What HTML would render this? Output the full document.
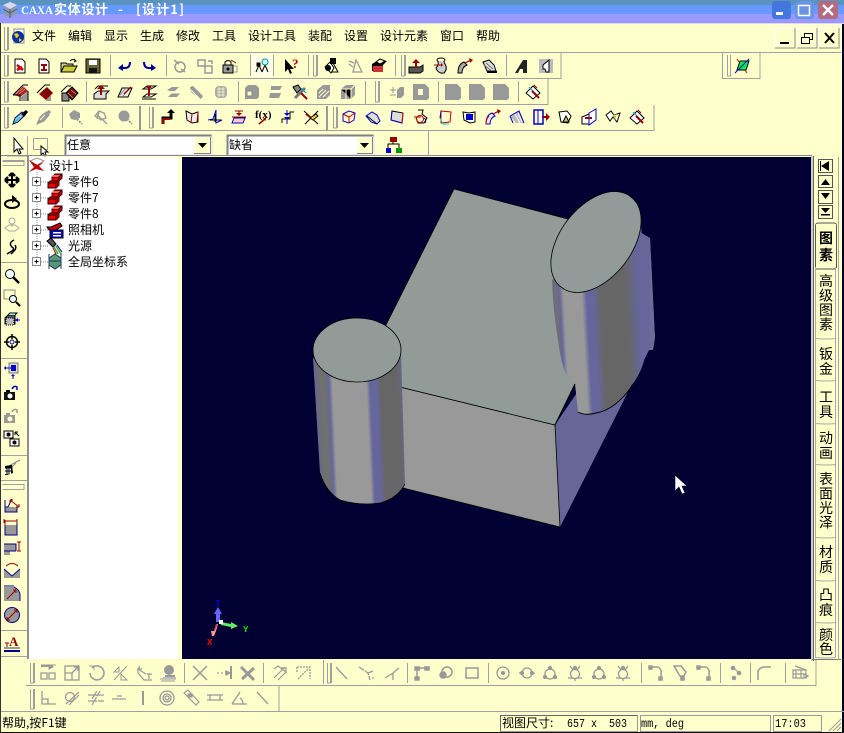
<!DOCTYPE html>
<html><head><meta charset="utf-8"><style>
html,body{margin:0;padding:0;background:#ffc}
svg{display:block;position:absolute;left:0;top:0}
text{font-family:"WenQuanYi Zen Hei","Noto Sans CJK SC",sans-serif;font-size:12px;fill:#000}
.m{font-family:"Liberation Mono","WenQuanYi Zen Hei",monospace}
.g{fill:none;stroke:#a0a0a0}
</style></head><body>
<svg width="844" height="733" viewBox="0 0 844 733" xmlns="http://www.w3.org/2000/svg">
<defs>
<pattern id="dt" width="2" height="2" patternUnits="userSpaceOnUse"><rect width="2" height="2" fill="#939a98"/><rect width="1" height="1" fill="#8a9f9a"/></pattern>
<linearGradient id="cl" gradientUnits="userSpaceOnUse" x1="315" y1="420" x2="406" y2="416">
<stop offset="0" stop-color="#66669c"/><stop offset=".04" stop-color="#6a6a80"/><stop offset=".08" stop-color="#707070"/><stop offset=".13" stop-color="#707070"/><stop offset=".17" stop-color="#66669c"/><stop offset=".21" stop-color="#999"/><stop offset=".58" stop-color="#999"/><stop offset=".62" stop-color="#66669c"/><stop offset=".69" stop-color="#66669c"/><stop offset=".74" stop-color="#666"/><stop offset=".92" stop-color="#666"/><stop offset="1" stop-color="#66669c"/>
</linearGradient>
<linearGradient id="cr" gradientUnits="userSpaceOnUse" x1="553" y1="331" x2="648" y2="326">
<stop offset="0" stop-color="#66669c"/><stop offset=".05" stop-color="#707070"/><stop offset=".09" stop-color="#66669c"/><stop offset=".13" stop-color="#999"/><stop offset=".32" stop-color="#999"/><stop offset=".37" stop-color="#66669c"/><stop offset=".44" stop-color="#66669c"/><stop offset=".52" stop-color="#666"/><stop offset=".78" stop-color="#666"/><stop offset=".92" stop-color="#66669c"/><stop offset="1" stop-color="#66669c"/>
</linearGradient>
<g id="docr"><path d="M3 1h7l3 3v11H3z" fill="#fff" stroke="#000"/><path d="M5 7l6 5M5 12l5-3" stroke="#c00" stroke-width="2.500" fill="none"/></g>
<g id="docb"><path d="M3 1h7l3 3v11H3z" fill="#fff" stroke="#000"/><path d="M5 6h6v2H9v3h2v2H5v-2h2V8H5z" fill="#900"/></g>
<g id="open"><path d="M0 14V5h5l1 1h6v8z" fill="#cc9" stroke="#000"/><path d="M0 14l3-6h13l-3 6z" fill="#cc3" stroke="#000"/><path d="M9 3q3-3 6 0M13 1l2 2-2 1" stroke="#000" fill="none"/></g>
<g id="save"><rect x="1" y="1" width="14" height="14" fill="#663" stroke="#000"/><rect x="4" y="2" width="8" height="5" fill="#fff"/><rect x="4" y="10" width="8" height="5" fill="#111"/></g>
<g id="undo"><path d="M13 12q0-6-5-6H3" fill="none" stroke="#0000a0" stroke-width="2" transform="matrix(1 0 0 -1 0 16)"/><path d="M1 10l5-4v7z" fill="#0000a0"/></g>
<g id="redo"><path d="M3 12q0-6 5-6h4" fill="none" stroke="#0000a0" stroke-width="2" transform="matrix(1 0 0 -1 0 16)"/><path d="M15 10l-5-4v7z" fill="#0000a0"/></g>
<g id="g1" fill="none" stroke="#999" stroke-width="1.500"><circle cx="8" cy="9" r="5"/><path d="M2 2l5 4M13 14l-4-3"/></g>
<g id="g2" fill="none" stroke="#999" stroke-width="1.500"><path d="M1 2h7v6H1zM8 8h7v7H8z"/><path d="M11 3h4v3"/></g>
<g id="lock"><rect x="2" y="7" width="10" height="8" fill="#999" stroke="#000"/><path d="M4 7V4q3-3 6 0v3" fill="none" stroke="#000"/><circle cx="7" cy="11" r="1.500" fill="#000"/><path d="M10 2l5 3" stroke="#900"/><path d="M13 8h3v6h-3" fill="none" stroke="#999"/></g>
<g id="tree" stroke="#000" fill="none"><path d="M5 7L2 14M5 7l3 7M11 7L8 14M11 7l3 7"/><circle cx="11" cy="4" r="3" stroke="#099" fill="#cff"/><rect x="3" y="5" width="3" height="3" fill="#000"/></g>
<g id="help"><path d="M1 1v13l3-3 2 5 2-1-2-4h4z" fill="#000"/><text x="8" y="10" style="font:bold 13px 'Liberation Serif';fill:#a00">?</text></g>
<g id="cog" fill="#000"><path d="M2 9l5-5 4 6-3 5z" fill="#fff" stroke="#000"/><rect x="7" y="0" width="6" height="6" fill="#000"/><circle cx="5" cy="10" r="3"/><path d="M10 5l5 9H9" fill="none" stroke="#000"/></g>
<g id="gtri" fill="none" stroke="#999" stroke-width="1.300"><path d="M2 3l5 2M2 6l4 3M9 2l6 12H6z"/></g>
<g id="rbox"><path d="M1 6l5-3h10l-4 4v6H1z" fill="#000"/><rect x="2" y="8" width="10" height="6" fill="#c33"/><path d="M5 4l4-3 5 2-5 3z" fill="#ffc" stroke="#000"/></g>
<g id="up"><path d="M1 9h11l3-2v6l-3 2H1z" fill="#555" stroke="#000"/><path d="M8 1l4 4H9v5H7V5H4z" fill="#900"/></g>
<g id="pot"><ellipse cx="8" cy="2" rx="4" ry="2" fill="#ffc" stroke="#000"/><path d="M5 3q1 4-2 7 2 6 8 5 4-4 1-9-1-1-1-3" fill="#ccc" stroke="#000"/><path d="M1 7h7" stroke="#900"/><path d="M8 5l2 2-2 2z" fill="#900"/></g>
<g id="arc"><path d="M1 15q0-9 6-11l3 3q-5 2-5 8z" fill="#aaa" stroke="#000"/><path d="M8 5l6-3" stroke="#900"/><path d="M12 0l4 2-3 3z" fill="#900"/></g>
<g id="slab"><path d="M2 4l6-2 5 5 2 6H6z" fill="#ddd" stroke="#000"/><path d="M3 7l9 7M5 5l7 6" stroke="#777"/><path d="M6 14h10" stroke="#000" stroke-width="2"/></g>
<g id="bigA"><path d="M1 15L9 2h4v13H9v-4H6l-2 4z" fill="#222"/></g>
<g id="hatch"><rect x="1" y="1" width="14" height="14" fill="#bbb"/><path d="M5 7l6-5v12H8l-1-3H5z" fill="#fff" stroke="#000"/></g>
<g id="greenp"><path d="M3 12l3-9h9l-3 9z" fill="#0e5" stroke="#000"/><path d="M1 15L15 1" stroke="#00c"/><path d="M3 1l2 3M11 12l2 3" stroke="#c00"/></g>
<g id="wedge1"><path d="M1 11L10 2l5 5-8 6z" fill="#a22"/><path d="M3 10l8-7M5 11l7-6" stroke="#ffc" stroke-width=".5"/><path d="M8 13l7-6v10H8z" fill="#999"/><path d="M0 11L10 1h5M0 11h7v6M15 7v10" fill="none" stroke="#000"/></g>
<g id="wedge2"><path d="M2 10l8-7 6 6-7 7z" fill="#900"/><path d="M4 10l6-5M7 12l6-5M6 6l7 7M9 4l6 6" stroke="#400" stroke-width=".7"/><path d="M0 9L8 1h5" fill="none" stroke="#000"/><path d="M9 16l5-5v6H9z" fill="#999"/></g>
<g id="wedge3"><rect x="1" y="9" width="7" height="8" fill="#888" stroke="#000"/><path d="M5 9l6-6 6 6-6 7z" fill="#711" stroke="#000"/><path d="M0 8l6-6h4" fill="none" stroke="#000"/><path d="M7 9l5 5M10 6l5 4" stroke="#ffc" stroke-width=".5"/></g>
<g id="ext1"><path d="M1 10l4-3h11l-3 3v5H1z" fill="#ddd" stroke="#000"/><path d="M2 5l3-3h10" fill="none" stroke="#000"/><path d="M8 1l4 4H9v6H7V5H4z" fill="#900"/></g>
<g id="ext2"><path d="M1 13l4-9h10l-4 9z" fill="#eee" stroke="#000"/><path d="M3 11l5-6M6 12l5-6" stroke="#888"/><path d="M7 10l7-7" stroke="#900" stroke-width="1.500"/></g>
<g id="ext3"><path d="M2 5l4-3h9l-5 3zM2 13l4-3h9l-5 3z" fill="#fff" stroke="#000"/><path d="M8 1l3 3H9v8H7V4H5z" fill="#900"/><path d="M1 15h14" stroke="#000"/></g>
<g id="gsw" fill="#999"><path d="M2 6l5-3h7l-4 4H5zM3 13l4-4h8l-3 4z"/><path d="M2 9h12" stroke="#ffc"/></g>
<g id="gsw2" fill="#999"><path d="M1 3l3-1 10 10-2 3L6 11 2 8z"/><path d="M2 6l8 8M6 3l8 8" stroke="#ffc"/></g>
<g id="gcy"><rect x="2" y="2" width="12" height="12" rx="4" fill="#aaa"/><path d="M4 5h8M4 8h8M4 11h8M6 3v10M10 3v10" stroke="#ffc" stroke-width=".7"/></g>
<g id="gb1"><path d="M1 4l3-3h8l3 3v9l-2 2H1z" fill="#999"/><rect x="3" y="7" width="5" height="5" fill="#ffc" stroke="#888"/></g>
<g id="gb2"><path d="M3 2h11l-2 4H3zM2 9h11l-2 5H1z" fill="#999"/></g>
<g id="tool"><path d="M1 3l5-2 3 4-4 4z" fill="#888" stroke="#000"/><path d="M3 14L13 4" stroke="#777" stroke-width="3"/><path d="M9 9l6 6" stroke="#900" stroke-width="2"/><path d="M9 4l5 5" stroke="#09c"/></g>
<g id="gb3"><path d="M1 6l6-5h7v10l-4 4H1z" fill="#999"/><path d="M3 13l7-7M3 9l4-4M7 13l6-6" stroke="#ffc"/></g>
<g id="gb4"><path d="M1 5l5-4h9v10l-4 4H1z" fill="#999"/><path d="M1 5h10v10M11 5l4-4M6 5v10" stroke="#ffc"/></g>
<g id="gpm"><path d="M1 6h6M4 3v6M1 11h6" stroke="#999"/><path d="M9 5l3-3h4v8l-3 3H9z" fill="#999" transform="translate(-1 1)"/></g>
<g id="gpb"><path d="M0 0h12l4 4v10l-2 2H0z" fill="#999"/><rect x="5" y="5" width="5" height="6" fill="#ffc"/></g>
<g id="gpf"><path d="M0 0h12l4 4v10l-2 2H0z" fill="#999"/></g>
<g id="toolb"><path d="M1 9l7-7 7 7-7 6z" fill="#fff" stroke="#000"/><path d="M4 3l7 7" stroke="#09c"/><path d="M7 7l7 7" stroke="#900" stroke-width="2"/><path d="M9 1l3 3" stroke="#900"/></g>
<g id="drop"><path d="M1 15l2-6 7-6 3 3-7 7z" fill="#9ce" stroke="#004"/><path d="M9 5l5-4 2 2-4 5z" fill="#000"/><path d="M2 14l6-6" stroke="#0cc"/></g>
<g id="dropg"><path d="M1 15l3-7 6-5 3 3-5 6z" fill="#999" stroke="#999"/><path d="M9 4l4-3 2 2-3 4z" fill="#999"/><path d="M4 11l5-5" stroke="#ffc"/></g>
<g id="gm1"><path d="M1 5l5-4 6 3 0 5-5 2-4-1z" fill="#999"/><path d="M9 10l5 5" stroke="#999" stroke-width="2" stroke-dasharray="2 1"/></g>
<g id="gm2" fill="none" stroke="#999" stroke-width="1.300"><path d="M2 7l4-5 5 2 2 5-5 2z"/><path d="M3 5l7 6M6 3l-2 7"/><path d="M10 11l4 4"/></g>
<g id="gm3"><circle cx="7" cy="7" r="5.500" fill="#999"/><path d="M10 10l5 5" stroke="#999" stroke-width="2" stroke-dasharray="2 1"/></g>
<g id="path"><path d="M3 15V9h8V3" fill="none" stroke="#000" stroke-width="3"/><path d="M3 15V10h7" fill="none" stroke="#900" stroke-width="2"/><path d="M11 0l4 4H7z" fill="#000"/></g>
<g id="rlf"><path d="M2 2l6 3 6-2v10l-6 1-5-3z" fill="#eee" stroke="#000"/><path d="M8 5l-1 9" stroke="#900"/><path d="M14 3l-1 10" stroke="#c00"/></g>
<g id="pl"><path d="M1 11l5-1 3-9v13l6-3H9" fill="none" stroke="#00c"/><path d="M8 5v8M3 11h11" stroke="#000"/></g>
<g id="pl2"><path d="M4 2h8M8 2v4" stroke="#900"/><path d="M5 4l3 3 3-3z" fill="#900"/><path d="M3 9h11l-2 5H1z" fill="#fcc" stroke="#00c"/><path d="M1 8h14" stroke="#900"/></g>
<g id="fx"><text x="0" y="9" style="font:bold 11px 'Liberation Serif'">f(x)</text><path d="M4 15l6-5" stroke="#900" stroke-width="1.500"/><path d="M8 9l3 0 0 3z" fill="#900"/></g>
<g id="cnt"><path d="M2 14v-4h8V3h4" fill="none" stroke="#000"/><path d="M7 1v5M7 10v5" stroke="#00c"/><path d="M4 7h6L7 10zM7 6L4 3h6z" fill="#00c" transform="translate(0 1)"/></g>
<g id="cross"><path d="M1 2l14 13M2 15L15 2" stroke="#000"/><path d="M7 9l6-4 2 2-5 4z" fill="#fc3" stroke="#000"/><path d="M3 5l4 3" stroke="#900" stroke-width="2"/></g>
<g id="bl1" fill="none"><path d="M2 5l6-3 6 2-1 7-5 3-6-2z" stroke="#00c"/><path d="M2 5l6 3 6-4M8 8v6" stroke="#c00"/></g>
<g id="bl2" fill="none"><path d="M1 7l6-4 5 3 3 6-3 3-6-2z" fill="#ddd" stroke="#00c"/><path d="M2 7l10 8" stroke="#000"/></g>
<g id="bl3"><path d="M3 2l11 2-1 10-11-3z" fill="#ddd" stroke="#000"/><path d="M3 2l-1 9" stroke="#00c"/><path d="M14 4l-1 10" stroke="#c00"/><path d="M2 11l11 3" stroke="#00c"/></g>
<g id="bl4" fill="none"><path d="M5 1h5l-1 4 5 4-3 5H5L3 9" stroke="#000"/><circle cx="7" cy="10" r="3.500" stroke="#c00"/><path d="M1 8h7" stroke="#900"/><path d="M11 9q3 2 1 5" stroke="#00c"/></g>
<g id="bl5" fill="none"><path d="M4 2l10 1-1 10-9 1z" stroke="#c00"/><path d="M3 9l3 6h6" stroke="#0cc"/><path d="M4 2L3 9" stroke="#00c"/></g>
<g id="bl6"><path d="M2 3l6 1 6-1 0 10-5 1-6-3z" fill="#fff" stroke="#000"/><rect x="5" y="5" width="7" height="6" fill="#00c"/></g>
<g id="bl7" fill="none"><path d="M1 15q0-9 6-11l3 3q-5 2-5 8z" fill="#eee" stroke="#00c"/><path d="M1 15q0-5 3-8" stroke="#c00"/><path d="M8 5l6-3" stroke="#900"/><path d="M12 0l4 2-3 3z" fill="#900"/></g>
<g id="bl8"><path d="M1 7l9-5 5 12H7z" fill="#bbb" stroke="none"/><path d="M1 7l9-5 5 12M1 7l3 7" fill="none" stroke="#00c"/><path d="M6 5l5 9M9 4l4 9" stroke="#fff"/></g>
<g id="bl9"><rect x="1" y="1" width="9" height="14" fill="#fff" stroke="#00c" stroke-width="1.500"/><path d="M5 1v14" stroke="#00c"/><path d="M9 7h5v2H9z" fill="#900"/><path d="M13 4l4 4-4 4z" fill="#900"/></g>
<g id="bl10"><path d="M2 3l8-1 4 5-3 7-7-1z" fill="#fff" stroke="#000"/><path d="M6 13l3-6 3 6z" fill="#cc6" stroke="#000"/></g>
<g id="bl11"><path d="M1 8l7-3v10L1 15z" fill="#fff" stroke="#000"/><path d="M8 4l7-4v11l-7 5z" fill="#fff" stroke="#00c"/><path d="M4 9h7" stroke="#900" stroke-width="2"/></g>
<g id="bl12"><path d="M1 6l5-4 3 4 6-2-3 9-4-5-3 4z" fill="#fff" stroke="#000"/><path d="M8 6l4-1-2 6z" fill="#cc3"/></g>
<g id="ml" stroke="#000" stroke-width="2" fill="none"><path d="M1 8h14M8 1v14"/><path d="M1 8l3-3M1 8l3 3M15 8l-3-3M15 8l-3 3M8 1L5 4M8 1l3 3M8 15l-3-3M8 15l3-3" stroke-width="2.500"/></g>
<g id="rot"><ellipse cx="8" cy="10" rx="7" ry="4" fill="none" stroke="#000" stroke-width="2"/><path d="M8 1l5 4-5 4z" fill="#000"/></g>
<g id="pers" fill="none" stroke="#aaa"><circle cx="8" cy="4" r="3"/><path d="M8 7v3M1 11l4-3h6l4 3-4 3H5z"/></g>
<g id="walk" fill="none" stroke="#000" stroke-width="1.500"><path d="M10 1Q4 4 8 8q3 2 0 4l-5 3"/><path d="M11 6q2 3-1 6l-3 3"/></g>
<g id="zm"><circle cx="6" cy="6" r="4.500" fill="#ecffff" stroke="#000"/><path d="M9 9l6 6" stroke="#000" stroke-width="2.500"/></g>
<g id="zw"><rect x="0" y="0" width="11" height="9" fill="none" stroke="#888"/><circle cx="9" cy="9" r="3.500" fill="#ecffff" stroke="#000"/><path d="M12 12l4 4" stroke="#000" stroke-width="2"/></g>
<g id="fit"><path d="M1 6l3-3h7v9H1z" fill="#555" stroke="#000"/><path d="M2 6h8v7H2z" fill="#bbb" stroke="#000" stroke-dasharray="1 1"/><path d="M4 3l2-2h7l-2 2" fill="#9ff" stroke="#000"/><path d="M11 8h5" stroke="#00c"/><path d="M11 8l3-2v4z" fill="#00c"/></g>
<g id="tgt"><circle cx="8" cy="8" r="5.500" fill="none" stroke="#000" stroke-width="1.500"/><path d="M8 0v5M8 11v5M0 8h5M11 8h5" stroke="#000" stroke-width="1.500"/><circle cx="8" cy="8" r="2" fill="none" stroke="#00c"/></g>
<g id="vw"><rect x="5" y="0" width="9" height="10" fill="#ddd" stroke="#777"/><rect x="7" y="2" width="5" height="6" fill="#00c"/><path d="M7 5H0M9 11v5" stroke="#00c"/><path d="M2 3v4l-2-2zM7 12h4l-2 2z" fill="#00c"/></g>
<g id="cam"><rect x="0" y="7" width="11" height="8" fill="#111"/><circle cx="6" cy="11" r="2.500" fill="#fff"/><path d="M2 6h4" stroke="#000" stroke-width="2"/><path d="M8 4q2-4 5-2l0 3" fill="none" stroke="#00c" stroke-width="1.500"/></g>
<g id="camg"><rect x="0" y="7" width="11" height="8" fill="#999"/><circle cx="6" cy="11" r="2.500" fill="#ffc"/><path d="M2 6h4" stroke="#999" stroke-width="2"/><path d="M8 4q2-4 5-2l0 3" fill="none" stroke="#999" stroke-width="1.500"/></g>
<g id="cam2"><rect x="0" y="1" width="9" height="7" fill="#fff" stroke="#000"/><circle cx="4.500" cy="4.500" r="2" fill="#000"/><rect x="6" y="9" width="9" height="7" fill="#fff" stroke="#000"/><circle cx="10.500" cy="12.500" r="2" fill="#000"/><path d="M11 2l4 4M11 2h3M11 2v3" stroke="#000"/></g>
<g id="dir"><path d="M3 7L16 0" stroke="#888"/><path d="M6 9l6-6" stroke="#888"/><path d="M1 6l7-1 1 8-6 2H1z" fill="#000"/><rect x="1" y="8" width="6" height="6" fill="#fff"/><path d="M1 8h6M1 11h6M3 8v6M5 8v6" stroke="#000"/></g>
<g id="d1"><rect x="1" y="10" width="12" height="5" fill="#999"/><path d="M1 3v12h12V10" fill="none" stroke="#008"/><path d="M1 10h3L8 2" fill="none" stroke="#008"/><path d="M6 3l9 7M6 3h3M6 3v3M15 10h-3M15 10V7" stroke="#900" fill="none"/></g>
<g id="d2"><rect x="1" y="6" width="12" height="10" fill="#999"/><path d="M1 6v10h12V1" fill="none" stroke="#008"/><path d="M0 2h13M0 0v4M13 0v4" fill="none" stroke="#900"/><path d="M1 1v6" stroke="#900"/></g>
<g id="d3"><path d="M0 3h12v7H6v4H0z" fill="#999"/><path d="M0 3h12v7" fill="none" stroke="#008"/><path d="M0 10h12" stroke="#008"/><path d="M15 1v9M13 1h4M13 10h4" stroke="#900"/></g>
<g id="d4"><path d="M0 6l8 7 8-7v9H0z" fill="#999"/><path d="M0 6l8 7 8-7" fill="none" stroke="#008"/><path d="M2 3q6-5 12 0M2 3l3-2M14 3l-3-2" fill="none" stroke="#900"/></g>
<g id="d5"><path d="M0 1h10q6 3 6 8v6H0z" fill="#999"/><path d="M10 1q6 3 6 8v6" fill="none" stroke="#008"/><path d="M0 0h10" stroke="#008"/><path d="M3 13L12 4" stroke="#900"/><path d="M12 4v3M12 4h-3" stroke="#900"/></g>
<g id="d6"><circle cx="8" cy="8" r="7.500" fill="#999" stroke="#008"/><path d="M3 13L13 3M3 13h3M3 13v-3M13 3h-3M13 3v3" stroke="#900" fill="none"/></g>
<g id="d7"><path d="M0 15h16" stroke="#008" stroke-width="2"/><path d="M0 11h16v2H0z" fill="#999"/><path d="M1 7h4M3 7v4" stroke="#900"/><text x="5" y="10" style="font:bold 13px 'Liberation Serif';fill:#900">A</text></g>
<g id="b1"><path d="M1 0h15M9 0l4 2-4 2z" stroke="#999" fill="#999"/><path d="M1 8h6v6H1zM9 8h6v6H9z" fill="none" stroke="#999" stroke-width="1.300"/><path d="M1 0h12v2H1z" fill="#999"/></g>
<g id="b2" fill="none" stroke="#999" stroke-width="1.300"><rect x="1" y="1" width="14" height="14"/><path d="M1 8h7v7M8 8l6-6M10 2h4v4"/></g>
<g id="b3" fill="none" stroke="#999" stroke-width="1.500"><path d="M4 3A7 7 0 1 1 2 8"/><path d="M1 1h5v4" stroke-width="1"/></g>
<g id="b4" fill="none" stroke="#999" stroke-width="1"><path d="M2 15L15 1M2 7h5V2zM9 15V9l6 6z"/></g>
<g id="b5" fill="none" stroke="#999" stroke-width="1.200"><path d="M2 4l8 5M2 4v4l6 7h8M4 1l-2 3 4 0M11 9h5M13 9v5"/></g>
<g id="b6"><ellipse cx="9" cy="5" rx="5" ry="5" fill="#999"/><rect x="5" y="10" width="10" height="2" fill="#999"/><path d="M0 14h16M1 16h14" stroke="#999"/><rect x="3" y="12" width="13" height="2" fill="#bbb"/></g>
<g id="b7" fill="none" stroke="#999" stroke-width="1.500"><path d="M1 1l14 14M15 1L1 15"/></g>
<g id="b8" fill="none" stroke="#999" stroke-width="1.300"><path d="M1 8h10" stroke-dasharray="2 2"/><path d="M15 1v13" stroke-width="2"/><path d="M10 6l4 2-4 2z" fill="#999"/></g>
<g id="b9"><path d="M1 2l13 13M2 14L14 3" stroke="#999" stroke-width="3"/></g>
<g id="b10" fill="none" stroke="#999" stroke-width="1.200"><path d="M2 4l4-3 8 6-8 8"/><path d="M2 13L13 2M9 3h5v5"/></g>
<g id="b11" fill="none" stroke="#999" stroke-dasharray="2 1" stroke-width="1.300"><path d="M1 2h13v12M2 14L13 3M1 2v6"/></g>
<g id="b12"><path d="M2 2l11 12" stroke="#999" stroke-width="1.300"/></g>
<g id="b13" fill="none" stroke="#999" stroke-width="1.300"><path d="M1 2l9 6 2 7M10 8l5-2M14 13h2" stroke-dasharray="6 1"/></g>
<g id="b14" fill="none" stroke="#999" stroke-width="1.300"><path d="M1 13l8-5 6-5M9 8v7"/></g>
<g id="b15" fill="none" stroke="#999" stroke-width="1.500"><path d="M3 5v8M13 3H5v3"/><rect x="1" y="2" width="4" height="3" fill="#999"/><rect x="1" y="12" width="4" height="3" fill="#999"/><rect x="11" y="2" width="4" height="3" fill="#999"/></g>
<g id="b16" fill="none" stroke="#999" stroke-width="1.500"><circle cx="9" cy="7" r="5"/><circle cx="5" cy="10" r="3" fill="#999"/></g>
<g id="b17" fill="none" stroke="#999" stroke-width="1.500"><rect x="2" y="3" width="12" height="10"/></g>
<g id="c0" fill="none" stroke="#999" stroke-width="1.300"><circle cx="8" cy="8" r="6"/><circle cx="8" cy="8" r="1.500" fill="#999"/></g>
<g id="c1" fill="none" stroke="#999" stroke-width="1.300"><circle cx="8" cy="8" r="5"/><path d="M0 8h3M13 8h3"/><circle cx="3" cy="8" r="1.500" fill="#999"/><circle cx="13" cy="8" r="1.500" fill="#999"/></g>
<g id="c2" fill="none" stroke="#999" stroke-width="1.300"><circle cx="8" cy="9" r="5"/><circle cx="8" cy="3" r="1.500" fill="#999"/><circle cx="3" cy="12" r="1.500" fill="#999"/><circle cx="13" cy="12" r="1.500" fill="#999"/></g>
<g id="c3" fill="none" stroke="#999" stroke-width="1.300"><circle cx="8" cy="9" r="4.500"/><path d="M3 1l3 4M13 1l-3 4M1 13h5M10 13h5M8 13v3"/><circle cx="8" cy="3" r="1.500" fill="#999"/></g>
<g id="e1" fill="none" stroke="#999" stroke-width="1.500"><path d="M2 2h8q4 2 3 7v5" /><rect x="1" y="1" width="3" height="3" fill="#999"/><rect x="11" y="12" width="3" height="3" fill="#999"/></g>
<g id="e2" fill="none" stroke="#999" stroke-width="1.500"><path d="M2 1h7l5 6-4 7-4-6z"/><rect x="9" y="11" width="3" height="4" fill="#999"/></g>
<g id="e3"><circle cx="5" cy="3" r="2.300" fill="#999"/><circle cx="11" cy="8" r="2.300" fill="#999"/><circle cx="6" cy="13" r="2.300" fill="#999"/><path d="M7 4l3 3" stroke="#999"/></g>
<g id="e4" fill="none" stroke="#999" stroke-width="1.500"><path d="M1 15V6q2-4 7-4h6"/></g>
<g id="e5" fill="none" stroke="#999" stroke-width="1.200"><path d="M1 5h13v8H1zM1 9h13M3 1l11 4M4 5v8M9 5v8M12 9l4 2-4 2z"/></g>
<g id="f1" fill="none" stroke="#999" stroke-width="1.300"><path d="M2 1v13h14M2 9h6v5"/></g>
<g id="f2" fill="none" stroke="#999" stroke-width="1.200"><circle cx="6" cy="7" r="4.500"/><path d="M2 14L15 2M5 15L15 5"/></g>
<g id="f3" fill="none" stroke="#999" stroke-width="1.200"><path d="M0 5h16M0 11h16M4 15L12 1M4 9L9 1" stroke-dasharray="9 1"/></g>
<g id="f4" fill="none" stroke="#999" stroke-width="1.300"><path d="M0 9h14M5 6h5"/></g>
<g id="f5" stroke="#999" stroke-width="2"><path d="M8 1v14"/></g>
<g id="f6" fill="none" stroke="#999" stroke-width="1.300"><circle cx="8" cy="8" r="7"/><circle cx="8" cy="8" r="4"/><circle cx="8" cy="8" r="2"/></g>
<g id="f7" fill="none" stroke="#999" stroke-width="1.200"><path d="M1 3l4-3 11 12-3 3z"/><rect x="5" y="4" width="4" height="3" fill="#999"/></g>
<g id="f8" fill="none" stroke="#999" stroke-width="1.300"><path d="M0 5h16M0 10h16M3 5h10v5H3z"/></g>
<g id="f9" fill="none" stroke="#999" stroke-width="1.300"><path d="M1 14L9 2M1 14h15M9 8q3 2 3 6"/></g>
<g id="part"><path d="M4 7V3l3-3h7v4l-3 3z" fill="#e00" stroke="#200"/><path d="M4 3h7v4M11 3l3-3" fill="none" stroke="#200"/><path d="M5 1h7l-2 2H4z" fill="#f66"/><path d="M0 14V9l2-2h9v4l-3 3z" fill="#e00" stroke="#200"/><path d="M0 9h8v5M8 9l3-2" fill="none" stroke="#200"/><path d="M8 9l3-2v4l-3 3z" fill="#900"/></g>
</defs>

<!-- titlebar -->
<rect width="844" height="5" fill="#5a93bd"/>
<rect y="5" width="844" height="9" fill="#6699ff"/>
<rect y="14" width="844" height="9" fill="#9999ff"/>
<rect y="23" width="844" height="1" fill="#d8d8f0"/>
<g transform="translate(2 2)"><path d="M8 0l7 3v9l-7 4-7-4V3z" fill="#8899bb"/><path d="M8 0l7 3-7 4-7-4z" fill="#d8d8f0"/><path d="M1 7l7 4 7-4M8 7v9" stroke="#556" fill="none"/></g>
<g style="font-weight:bold">
<text x="21" y="14" textLength="32" lengthAdjust="spacingAndGlyphs" style="fill:#fff;font-weight:bold;font-family:'Liberation Serif',serif;font-size:12px">CAXA</text>
<text x="54" y="14" textLength="54" style="fill:#fff;font-weight:bold;font-size:13px">实体设计</text>
<text x="118" y="14" style="fill:#fff;font-weight:bold;font-size:13px">-</text>
<text x="136" y="14" textLength="48" style="fill:#fff;font-weight:bold;font-size:13px">[设计1]</text>
</g>
<rect x="772" y="1" width="19" height="18" rx="3" fill="#4477dd"/><rect x="776" y="12" width="7" height="3" fill="#fff"/>
<rect x="795" y="1" width="19" height="18" rx="3" fill="#6a93e6"/><rect x="798.500" y="5.500" width="11" height="10" fill="none" stroke="#fff" stroke-width="1.500"/>
<rect x="818" y="1" width="20" height="18" rx="3" fill="#b56a80"/><path d="M823 5l10 10M833 5l-10 10" stroke="#fff" stroke-width="2.500"/>
<!-- bg lines -->
<g class="g" shape-rendering="crispEdges">
<path d="M0 52.500H841"/>
<path d="M0 78.500H561V53M722 78.500H760V53M722.500 53V78"/>
<path d="M0 104.500H548V79"/>
<path d="M0 130.500H654V105"/>
<path d="M428.500 131V156"/>
<path d="M110.500 55V76M166.500 55V76M250.500 55V76M273.500 55V76M308.500 55V76M395.500 55V76M506.500 55V76"/>
<path d="M86.500 81V102M238.500 81V102M365.500 81V104M438.500 81V102M518.500 81V102"/>
<path d="M62.500 107V128"/>
</g>
<rect x="139" y="106" width="2" height="24" fill="#999"/><rect x="326" y="106" width="2" height="24" fill="#999"/>
<!-- grips -->
<g class="g" shape-rendering="crispEdges">
<path d="M4.500 27V50H7.500V27M8.500 27V50"/>
<path d="M4.500 55V76H7.500V55M8.500 55V76"/><path d="M313.500 55V76H316.500V55M317.500 55V76"/><path d="M401.500 55V76H404.500V55M405.500 55V76"/><path d="M727.500 55V76H730.500V55"/>
<path d="M4.500 81V102H7.500V81M8.500 81V102"/><path d="M375.500 81V102H378.500V81M379.500 81V102"/>
<path d="M4.500 107V128H7.500V107M8.500 107V128"/><path d="M149.500 107V128H152.500V107M153.500 107V128"/><path d="M333.500 107V128H336.500V107M337.500 107V128"/>
</g>
<!-- menu -->
<g transform="translate(10 28)"><path d="M4 1h10v14H4z" fill="#fff" stroke="#888"/><circle cx="8" cy="9" r="6" fill="#0033aa"/><path d="M4 6q3-2 5 1-1 3-3 3zM9 10l3 2-3 2z" fill="#fc0"/></g>
<text x="32" y="40">文件</text><text x="68" y="40">编辑</text><text x="104" y="40">显示</text><text x="140" y="40">生成</text><text x="176" y="40">修改</text><text x="212" y="40">工具</text><text x="248" y="40">设计工具</text><text x="308" y="40">装配</text><text x="344" y="40">设置</text><text x="380" y="40">设计元素</text><text x="440" y="40">窗口</text><text x="476" y="40">帮助</text>
<g>
<path d="M775 48V28h20" stroke="#fff" fill="none"/><path d="M775 48h20V28" stroke="#888" fill="none"/><rect x="780" y="42" width="9" height="2"/>
<path d="M797 48V28h20" stroke="#fff" fill="none"/><path d="M797 48h20V28" stroke="#888" fill="none"/><rect x="804.500" y="33.500" width="8" height="6" fill="none" stroke="#000" stroke-width="1"/><rect x="801.500" y="37.500" width="8" height="6" fill="#ffc" stroke="#000" stroke-width="1"/>
<path d="M819 48V28h20" stroke="#fff" fill="none"/><path d="M819 48h20V28" stroke="#888" fill="none"/><path d="M825 33l9 10M834 33l-9 10" stroke="#000" stroke-width="2"/>
</g>
<!-- toolbar 1 -->
<g>
<use href="#docr" x="12" y="58"/><use href="#docb" x="36" y="58"/><use href="#open" x="61" y="58"/><use href="#save" x="85" y="58"/>
<use href="#undo" x="117" y="58"/><use href="#redo" x="141" y="58"/>
<use href="#g1" x="172" y="58"/><use href="#g2" x="197" y="58"/><use href="#lock" x="221" y="58"/>
<rect x="251" y="55" width="22" height="22" fill="#ffffe8"/>
<use href="#tree" x="254" y="58"/><use href="#help" x="284" y="58"/>
<use href="#cog" x="323" y="58"/><use href="#gtri" x="347" y="58"/><use href="#rbox" x="371" y="58"/>
<use href="#up" x="408" y="58"/><use href="#pot" x="433" y="58"/><use href="#arc" x="457" y="58"/><use href="#slab" x="481" y="58"/>
<use href="#bigA" x="514" y="58"/><use href="#hatch" x="538" y="58"/><use href="#greenp" x="734" y="58"/>
</g>
<!-- toolbar 2 -->
<g>
<use href="#wedge1" x="13" y="84"/><use href="#wedge2" x="37" y="84"/><use href="#wedge3" x="61" y="84"/>
<use href="#ext1" x="93" y="84"/><use href="#ext2" x="117" y="84"/><use href="#ext3" x="141" y="84"/><use href="#gsw" x="165" y="84"/><use href="#gsw2" x="189" y="84"/><use href="#gcy" x="213" y="84"/>
<use href="#gb1" x="244" y="84"/><use href="#gb2" x="268" y="84"/><use href="#tool" x="292" y="84"/><use href="#gb3" x="316" y="84"/><use href="#gb4" x="340" y="84"/>
<use href="#gpm" x="389" y="84"/><use href="#gpb" x="413" y="84"/><use href="#gpf" x="445" y="84"/><use href="#gpf" x="469" y="84"/><use href="#gpf" x="493" y="84"/><use href="#toolb" x="525" y="84"/>
</g>
<!-- toolbar 3 -->
<g>
<use href="#drop" x="12" y="109"/><use href="#dropg" x="36" y="109"/><use href="#gm1" x="68" y="109"/><use href="#gm2" x="93" y="109"/><use href="#gm3" x="117" y="109"/>
<use href="#path" x="160" y="109"/><use href="#rlf" x="184" y="109"/><use href="#pl" x="207" y="109"/><use href="#pl2" x="231" y="109"/><use href="#fx" x="255" y="109"/><use href="#cnt" x="280" y="109"/><use href="#cross" x="303" y="109"/>
<use href="#bl1" x="341" y="109"/><use href="#bl2" x="365" y="109"/><use href="#bl3" x="389" y="109"/><use href="#bl4" x="413" y="109"/><use href="#bl5" x="437" y="109"/><use href="#bl6" x="461" y="109"/><use href="#bl7" x="485" y="109"/><use href="#bl8" x="509" y="109"/><use href="#bl9" x="533" y="109"/><use href="#bl10" x="557" y="109"/><use href="#bl11" x="581" y="109"/><use href="#bl12" x="605" y="109"/><use href="#toolb" x="629" y="109"/>
</g>
<!-- row 4 -->
<path d="M6.500 156V136.500H27" fill="none" stroke="#fff"/><path d="M6.500 156H27.500V136.500" fill="none" stroke="#a0a0a0"/><path d="M14 138v14l3-3 2 5 2-1-2-4h4z" fill="#fff" stroke="#000"/>
<rect x="33.500" y="138.500" width="14" height="11" fill="none" stroke="#a0a0a0"/><path d="M41 146v9l2-2 2 3 1-1-1-3h3z" fill="#fff" stroke="#000"/>
<rect x="65" y="135" width="147" height="20" fill="#fff"/><path d="M65.500 155V135.500H211.500" fill="none" stroke="#808080" stroke-width="2"/><rect x="194" y="137" width="17" height="17" fill="#ffc"/><path d="M194 154V137H211" fill="none" stroke="#fff"/><path d="M194 153.500H210.500V137" fill="none" stroke="#808080"/><path d="M198 143h9l-4.500 5z"/><path d="M66 155H212V135" fill="none" stroke="#ddd"/>
<text x="67" y="149">任意</text>
<rect x="227" y="135" width="147" height="20" fill="#fff"/><path d="M227.500 155V135.500H373.500" fill="none" stroke="#808080" stroke-width="2"/><rect x="357" y="137" width="16" height="17" fill="#ffc"/><path d="M357 154V137H373" fill="none" stroke="#fff"/><path d="M357 153.500H372.500V137" fill="none" stroke="#808080"/><path d="M360 143h9l-4.500 5z"/><path d="M228 155H374V135" fill="none" stroke="#ddd"/>
<text x="229" y="149">缺省</text>
<rect x="390" y="137" width="7" height="5" fill="#900"/><path d="M393 142v2M388 148v-4h11v4" fill="none" stroke="#000"/><rect x="386" y="148" width="5" height="5" fill="#00c"/><rect x="396" y="148" width="6" height="5" fill="#090"/>

<!-- left toolbar & tree -->
<rect y="155" width="812" height="1" fill="#888"/>
<rect x="27" y="156" width="2" height="503" fill="#909090"/>
<rect x="29" y="157" width="149" height="502" fill="#fff"/>
<rect x="182" y="157" width="629" height="502" fill="#000033"/>
<g class="g" shape-rendering="crispEdges"><path d="M2.500 160.500H24V165.500H2.500M2.500 161.500H24"/><path d="M0 262.500H27M0 358.500H27M0 455.500H27M0 480.500H27M0 630.500H27M0 656.500H27"/><path d="M2.500 484.500H24V489.500H2.500"/></g>
<use href="#ml" x="4" y="172"/><use href="#rot" x="4" y="194"/><use href="#pers" x="4" y="217"/><use href="#walk" x="4" y="239"/>
<use href="#zm" x="4" y="268"/><use href="#zw" x="4" y="290"/><use href="#fit" x="4" y="312"/><use href="#tgt" x="4" y="334"/>
<use href="#vw" x="4" y="363"/><use href="#cam" x="4" y="385"/><use href="#camg" x="4" y="408"/><use href="#cam2" x="4" y="430"/>
<use href="#dir" x="4" y="460"/>
<use href="#d1" x="4" y="497"/><use href="#d2" x="4" y="519"/><use href="#d3" x="4" y="541"/><use href="#d4" x="4" y="563"/><use href="#d5" x="4" y="586"/><use href="#d6" x="4" y="607"/><use href="#d7" x="4" y="636"/>

<!-- tree -->
<path d="M37 172V262M41 182h8M41 198h8M41 214h8M41 230h8M41 246h8M41 262h8" stroke="#888" stroke-dasharray="1 1" fill="none"/>
<g transform="translate(28 158)"><path d="M2 3l7-3 7 3-7 4z" fill="#fff" stroke="#999"/><path d="M1 2l8 5 7-3-5 4 5 5-8-2-7 3 5-5z" fill="#b00"/></g>
<text x="49" y="170">设计1</text>
<g fill="#fff" stroke="#888" shape-rendering="crispEdges"><rect x="32.500" y="177.500" width="8" height="8"/><rect x="32.500" y="193.500" width="8" height="8"/><rect x="32.500" y="209.500" width="8" height="8"/><rect x="32.500" y="225.500" width="8" height="8"/><rect x="32.500" y="241.500" width="8" height="8"/><rect x="32.500" y="257.500" width="8" height="8"/></g>
<path d="M34.500 181.500h4M36.500 179.500v4M34.500 197.500h4M36.500 195.500v4M34.500 213.500h4M36.500 211.500v4M34.500 229.500h4M36.500 227.500v4M34.500 245.500h4M36.500 243.500v4M34.500 261.500h4M36.500 259.500v4" stroke="#000" shape-rendering="crispEdges"/>
<use href="#part" x="48" y="174"/><use href="#part" x="48" y="190"/><use href="#part" x="48" y="206"/>
<text x="68" y="186">零件6</text><text x="68" y="202">零件7</text><text x="68" y="218">零件8</text><text x="68" y="234">照相机</text><text x="68" y="250">光源</text><text x="68" y="266">全局坐标系</text>
<g transform="translate(47 223)"><path d="M0 4h4l9-4 2 3-6 4H2z" fill="#c00" stroke="#000"/><rect x="3" y="7" width="13" height="8" fill="#00c" stroke="#000"/><rect x="6" y="9" width="8" height="1.500" fill="#fff"/><rect x="6" y="12" width="8" height="1.500" fill="#fff"/></g>
<g transform="translate(47 238)"><path d="M6 9l4-3 6 10-7 0z" fill="#ddc"/><path d="M0 3l4-3 5 6-3 3z" fill="#555" stroke="#000"/><path d="M9 8l5 8M7 9l4 7" stroke="#0a0"/><path d="M10 7l5 7" stroke="#00c"/><path d="M6 10l3 6" stroke="#c00"/></g>
<path d="M55 254l6 4v7l-6 4-6-4v-7z" fill="#597" stroke="#234"/><path d="M49 254v15M61 254v15M49 261h12" stroke="#236"/>

<!-- 3D model -->
<polygon points="655,338 650,238 640,232 640,300 555,425 560,527" fill="#666699"/>
<path d="M650 238l5 100-2 12-4 0" fill="#6c6c99"/>
<path d="M555 425l5 102 95-189" fill="#666699"/>
<polygon points="400,387 555,425 560,527 403,488" fill="#999" stroke="#000" stroke-width=".8"/>
<polygon points="454,189 640,238 575,384 555,425 400,387 386,325" fill="url(#dt)" stroke="#000" stroke-width=".8"/>
<path d="M552 280 Q553 310 558 340 Q561 365 568 378 L575 384 L578 412 Q585 416 596 413 Q615 410 630 387 Q650 365 648 320 L641 225 Z" fill="url(#cr)"/>
<path d="M575 384L555 425" stroke="#000" fill="none"/>
<path d="M578 412 Q585 416 596 413 Q615 410 632 386" stroke="#000" fill="none"/>
<path d="M630.700 196.800A57 35 -52.500 1 0 561.300 287.200A57 35 -52.500 1 0 630.700 196.800Z" fill="url(#dt)" stroke="#000" stroke-width=".8"/>
<path d="M313 358 L320 473 Q326 492 340 500 Q360 506 380 503 Q398 498 405 484 L401 352 Z" fill="url(#cl)"/>
<path d="M320 473 Q326 492 340 500 Q360 506 380 503 Q398 498 405 484" fill="none" stroke="#000" stroke-width=".8"/>
<ellipse cx="357" cy="350" rx="44" ry="32" fill="url(#dt)" stroke="#000" stroke-width=".8"/>
<!-- cursor -->
<path d="M675 475v16l4-4 3 7 3-1-3-7h5z" fill="#fff" stroke="#000033" stroke-width=".6"/>
<!-- triad -->
<rect x="216" y="612" width="3" height="10" fill="#aab"/>
<path d="M218 607l4 7h-2v8h-4v-8h-2z" fill="#6666ff"/>
<path d="M221 622l10 2v-2l7 4-7 3v-2l-10-2z" fill="#66ee66"/><rect x="219" y="620" width="4" height="4" fill="#fff"/>
<path d="M218 624l-2 7 -2 5h-2l-1-5 3 0 2-7z" fill="#ff9999"/><path d="M217 624l-3 7" stroke="#c33"/>
<text x="215" y="606" style="font:bold 9px 'Liberation Mono';fill:#00c">I</text><text x="243" y="632" style="font:bold 9px 'Liberation Mono';fill:#0e0">Y</text><text x="207" y="645" style="font:bold 9px 'Liberation Mono';fill:#f00">X</text>

<!-- right tabs -->
<rect x="811" y="156" width="33" height="505" fill="#ffc"/>
<rect x="811" y="156" width="2" height="505" fill="#ccc"/>
<rect x="813" y="156" width="1" height="505" fill="#666"/>
<rect x="812" y="659" width="29" height="1" fill="#777"/>
<rect x="838" y="157" width="1" height="503" fill="#aaa"/>
<rect x="842" y="24" width="2" height="709" fill="#002"/>
<g stroke="#555" fill="#ffc" shape-rendering="crispEdges"><rect x="818.500" y="159.500" width="14" height="13"/><rect x="818.500" y="175.500" width="14" height="12"/><rect x="818.500" y="190.500" width="14" height="13"/><rect x="818.500" y="205.500" width="14" height="13"/></g>
<path d="M821 166l8-5v10zM820 161h1v10h-1zM821 185l4.500-6 4.500 6zM821 193l4.500 6 4.500-6zM821 208h9l-4.500 5zM821 214h9v1.500h-9z"/>
<g fill="none" stroke="#555"><path d="M815.500 267.500V226q0-3 3-3h15q3 0 3 3V267q-1 2-3 2H815"/><path d="M815.500 267V338.500q12 1 20 0V267M815.500 338.500V380.500q12 1 20 0V338M815.500 380.500V423.500q12 1 20 0V380M815.500 423.500V464.500q12 1 20 0V423M815.500 464.500V537.500q12 1 20 0V464M815.500 537.500V580.500q12 1 20 0V537M815.500 580.500V622.500q12 1 20 0V580M815.500 622.500V657.500q12 1 20 0V622" stroke="#aaa"/></g>
<rect x="816" y="224" width="20" height="43" fill="#ffc"/>
<g>
<text x="826" y="243" style="font-size:14px;font-weight:bold;text-anchor:middle"><tspan x="826">图</tspan><tspan x="826" dy="17">素</tspan></text>
<text x="826" y="286" style="font-size:14px;text-anchor:middle"><tspan x="826">高</tspan><tspan x="826" dy="14.500">级</tspan><tspan x="826" dy="14.500">图</tspan><tspan x="826" dy="14.500">素</tspan></text>
<text x="826" y="359" style="font-size:14px;text-anchor:middle"><tspan x="826">钣</tspan><tspan x="826" dy="15">金</tspan></text>
<text x="826" y="402" style="font-size:14px;text-anchor:middle"><tspan x="826">工</tspan><tspan x="826" dy="15">具</tspan></text>
<text x="826" y="443" style="font-size:14px;text-anchor:middle"><tspan x="826">动</tspan><tspan x="826" dy="15">画</tspan></text>
<text x="826" y="484" style="font-size:14px;text-anchor:middle"><tspan x="826">表</tspan><tspan x="826" dy="14.500">面</tspan><tspan x="826" dy="14.500">光</tspan><tspan x="826" dy="14.500">泽</tspan></text>
<text x="826" y="557" style="font-size:14px;text-anchor:middle"><tspan x="826">材</tspan><tspan x="826" dy="15">质</tspan></text>
<text x="826" y="600" style="font-size:14px;text-anchor:middle"><tspan x="826">凸</tspan><tspan x="826" dy="15">痕</tspan></text>
<text x="826" y="640" style="font-size:14px;text-anchor:middle"><tspan x="826">颜</tspan><tspan x="826" dy="14">色</tspan></text>
</g>

<!-- bottom toolbars -->
<g class="g" shape-rendering="crispEdges">
<path d="M26 685.500H816V660M26 711.500H279V686M0 711.500H844"/>
<path d="M30.500 663V683H33.500V663M34.500 663V683M30.500 689V709H33.500V689M34.500 689V709"/>
<path d="M184.500 663V683M263.500 663V683M407.500 663V683M488.500 663V683M641.500 663V683M720.500 663V683M750.500 663V683M785.500 663V683"/>
<path d="M327.500 663V683H330.500V663M331.500 663V683M323.500 660V684"/>
</g>
<g>
<use href="#b1" x="40" y="665"/><use href="#b2" x="64" y="665"/><use href="#b3" x="88" y="665"/><use href="#b4" x="112" y="665"/><use href="#b5" x="136" y="665"/><use href="#b6" x="160" y="665"/>
<use href="#b7" x="192" y="665"/><use href="#b8" x="216" y="665"/><use href="#b9" x="240" y="665"/><use href="#b10" x="272" y="665"/><use href="#b11" x="296" y="665"/>
<use href="#b12" x="334" y="665"/><use href="#b13" x="358" y="665"/><use href="#b14" x="384" y="665"/><use href="#b15" x="414" y="665"/><use href="#b16" x="438" y="665"/><use href="#b17" x="464" y="665"/>
<use href="#c0" x="495" y="665"/><use href="#c1" x="519" y="665"/><use href="#c2" x="542" y="665"/><use href="#c3" x="567" y="665"/><use href="#c2" x="591" y="665"/><use href="#c3" x="615" y="665"/>
<use href="#e1" x="648" y="665"/><use href="#e2" x="672" y="665"/><use href="#e1" x="696" y="665"/><use href="#e3" x="728" y="665"/><use href="#e4" x="757" y="665"/><use href="#e5" x="792" y="665"/>
<use href="#f1" x="40" y="690"/><use href="#f2" x="64" y="690"/><use href="#f3" x="88" y="690"/><use href="#f4" x="112" y="690"/><use href="#f5" x="135" y="690"/><use href="#f6" x="159" y="690"/><use href="#f7" x="183" y="690"/><use href="#f8" x="207" y="690"/><use href="#f9" x="231" y="690"/><use href="#b12" x="255" y="690"/>
</g>

<!-- status -->
<text x="2" y="727">帮助,按F1键</text>
<g fill="none" stroke="#999" shape-rendering="crispEdges"><rect x="500.500" y="715.500" width="137" height="16"/><rect x="640.500" y="715.500" width="130" height="16"/><rect x="773.500" y="715.500" width="48" height="16"/></g>
<path d="M500.500 731V715.500H637" stroke="#666" fill="none"/>
<text x="502" y="727">视图尺寸:</text>
<text class="m" x="567" y="727" textLength="18" lengthAdjust="spacingAndGlyphs">657</text>
<text class="m" x="591" y="727" textLength="6" lengthAdjust="spacingAndGlyphs">x</text>
<text class="m" x="609" y="727" textLength="18" lengthAdjust="spacingAndGlyphs">503</text>
<text class="m" x="641" y="727" textLength="43" lengthAdjust="spacingAndGlyphs">mm, deg</text>
<text class="m" x="775" y="727" textLength="31" lengthAdjust="spacingAndGlyphs">17:03</text>
<path d="M829 731l12-12M833 731l8-8M837 731l4-4" stroke="#999"/>
<rect y="23" width="1" height="710" fill="#333"/>
<rect y="732" width="844" height="1" fill="#111"/>
</svg>
</body></html>
